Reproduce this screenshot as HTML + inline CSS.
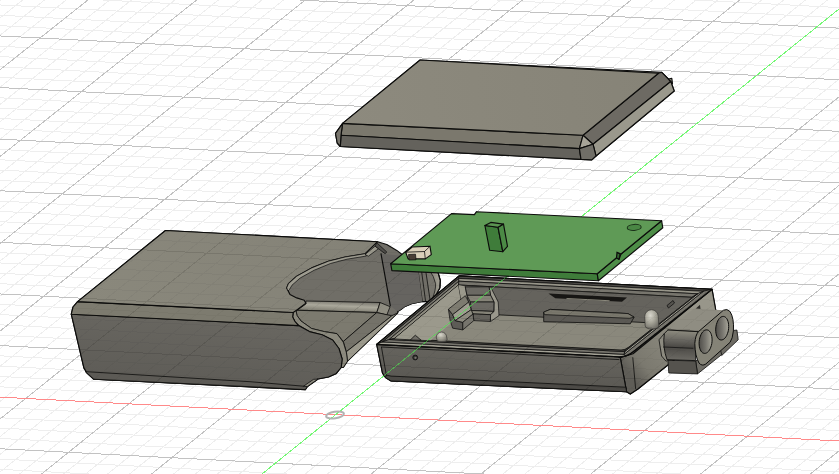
<!DOCTYPE html>
<html><head><meta charset="utf-8"><title>Exploded enclosure view</title>
<style>html,body{margin:0;padding:0;background:#fff;font-family:"Liberation Sans",sans-serif}svg{display:block}</style>
</head><body>
<svg width="839" height="474" viewBox="0 0 839 474">
<defs>
<linearGradient id="lidtop" gradientUnits="userSpaceOnUse" x1="340" y1="120" x2="660" y2="75"><stop offset="0" stop-color="#8d8a7e"/><stop offset="1" stop-color="#868377"/></linearGradient>
<linearGradient id="stop" gradientUnits="userSpaceOnUse" x1="80" y1="300" x2="370" y2="245"><stop offset="0" stop-color="#8a887c"/><stop offset="1" stop-color="#848277"/></linearGradient>
<linearGradient id="sfront" gradientUnits="userSpaceOnUse" x1="200" y1="320" x2="194" y2="386"><stop offset="0" stop-color="#686660"/><stop offset="1" stop-color="#5e5c57"/></linearGradient>
<linearGradient id="sfillet" gradientUnits="userSpaceOnUse" x1="340" y1="301" x2="339.5" y2="312"><stop offset="0" stop-color="#77756d"/><stop offset="0.45" stop-color="#aaa89b"/><stop offset="1" stop-color="#7a786d"/></linearGradient>
<linearGradient id="cfront" gradientUnits="userSpaceOnUse" x1="500" y1="350" x2="498" y2="388"><stop offset="0" stop-color="#66645e"/><stop offset="1" stop-color="#595752"/></linearGradient>
<linearGradient id="cright" gradientUnits="userSpaceOnUse" x1="628" y1="372" x2="700" y2="315"><stop offset="0" stop-color="#5f5d57"/><stop offset="0.18" stop-color="#7b796f"/><stop offset="1" stop-color="#98968a"/></linearGradient>
<linearGradient id="barrel" gradientUnits="userSpaceOnUse" x1="680" y1="331" x2="679" y2="360"><stop offset="0" stop-color="#8c8a7e"/><stop offset="0.3" stop-color="#6a6862"/><stop offset="0.55" stop-color="#4b4945"/><stop offset="1" stop-color="#6c6a64"/></linearGradient>
<linearGradient id="hole" gradientUnits="objectBoundingBox" x1="0" y1="0.5" x2="1" y2="0.45"><stop offset="0" stop-color="#504e4a"/><stop offset="0.5" stop-color="#77756e"/><stop offset="1" stop-color="#a8a69a"/></linearGradient>
<radialGradient id="pin" cx="0.4" cy="0.3" r="0.8"><stop offset="0" stop-color="#d8d6cc"/><stop offset="0.5" stop-color="#a3a195"/><stop offset="1" stop-color="#66645e"/></radialGradient>
<linearGradient id="send" gradientUnits="userSpaceOnUse" x1="431" y1="285" x2="441" y2="283"><stop offset="0" stop-color="#858377"/><stop offset="1" stop-color="#a5a397"/></linearGradient>
<clipPath id="lowclip"><polygon points="77.6,301.6 165.5,230.5 377.6,241.7 386.8,244.5 396.8,250.4 404.0,256.0 436.0,270.0 438.2,273.2 440.3,280.5 439.8,287.9 436.0,295.0 430.0,301.5 421.0,301.6 411.4,303.7 405.0,306.4 400.8,309.5 397.6,311.6 398.0,312.7 347.5,361.2 343.3,367.5 341.2,367.5 335.9,373.8 328.5,377.0 318.0,379.0 307.4,386.5 305.3,389.6 93.9,379.2 87.0,373.0 83.9,367.9 71.3,314.2 73.0,307.0"/><polygon points="376.7,344.4 459.1,275.9 712.0,289.2 718.3,324.5 637.9,389.0 630.3,394.1 626.6,391.8 391.1,380.9 385.5,377.5 382.5,373.2"/></clipPath>
</defs>

<rect width="839" height="474" fill="#fff"/>
<g stroke-width="1" fill="none" opacity="1.0" shape-rendering="crispEdges">
<path d="M-421.4,-10L-1051.1,484M-399.6,-10L-1029.1,484M-377.8,-10L-1007.0,484M-356.1,-10L-984.9,484M-312.6,-10L-940.8,484M-290.8,-10L-918.7,484M-269.1,-10L-896.6,484M-247.3,-10L-874.5,484M-203.8,-10L-830.4,484M-182.1,-10L-808.3,484M-160.3,-10L-786.3,484M-138.6,-10L-764.2,484M-95.1,-10L-720.1,484M-73.3,-10L-698.0,484M-51.6,-10L-676.0,484M-29.9,-10L-653.9,484M13.6,-10L-609.8,484M35.3,-10L-587.8,484M57.1,-10L-565.7,484M78.8,-10L-543.7,484M122.3,-10L-499.6,484M144.0,-10L-477.5,484M165.7,-10L-455.5,484M187.5,-10L-433.4,484M230.9,-10L-389.4,484M252.7,-10L-367.3,484M274.4,-10L-345.3,484M296.1,-10L-323.3,484M339.5,-10L-279.2,484M361.3,-10L-257.2,484M383.0,-10L-235.1,484M404.7,-10L-213.1,484M448.1,-10L-169.1,484M469.8,-10L-147.0,484M491.6,-10L-125.0,484M513.3,-10L-103.0,484M556.7,-10L-59.0,484M578.4,-10L-36.9,484M600.1,-10L-14.9,484M621.8,-10L7.1,484M665.2,-10L51.1,484M686.9,-10L73.1,484M708.6,-10L95.1,484M730.3,-10L117.1,484M774.0,-10L161.1,484M796.0,-10L183.0,484M817.9,-10L205.0,484M839.9,-10L227.0,484M883.8,-10L270.9,484M905.7,-10L292.8,484M927.7,-10L314.8,484M949.7,-10L336.8,484M993.6,-10L380.7,484M1015.5,-10L402.6,484M1037.5,-10L424.6,484M1059.4,-10L446.5,484M1103.4,-10L490.5,484M1125.3,-10L512.4,484M1147.3,-10L534.4,484M1169.2,-10L556.3,484M1213.2,-10L600.2,484M1235.1,-10L622.2,484M1257.1,-10L644.2,484M1279.0,-10L666.1,484M1322.9,-10L710.0,484M1344.9,-10L732.0,484M1366.9,-10L754.0,484M1388.8,-10L775.9,484M1432.7,-10L819.8,484M1454.7,-10L841.8,484M1476.6,-10L863.7,484M1498.6,-10L885.7,484M1542.5,-10L929.6,484M1564.5,-10L951.6,484M1586.4,-10L973.5,484M1608.4,-10L995.5,484M1652.3,-10L1039.4,484M1674.3,-10L1061.4,484M1696.2,-10L1083.3,484M1718.2,-10L1105.3,484M-10,-109.1L849,-64.2M-10,-98.8L849,-53.9M-10,-88.5L849,-43.5M-10,-78.1L849,-33.2M-10,-57.5L849,-12.6M-10,-47.2L849,-2.3M-10,-36.9L849,8.1M-10,-26.5L849,18.4M-10,-5.9L849,39.0M-10,4.4L849,49.3M-10,14.7L849,59.7M-10,25.1L849,70.0M-10,45.7L849,90.6M-10,56.0L849,100.9M-10,66.3L849,111.3M-10,76.7L849,121.6M-10,97.3L849,142.2M-10,107.6L849,152.5M-10,117.9L849,162.9M-10,128.3L849,173.2M-10,148.9L849,193.8M-10,159.2L849,204.1M-10,169.5L849,214.5M-10,179.9L849,224.8M-10,200.5L849,245.4M-10,210.8L849,255.7M-10,221.1L849,266.1M-10,231.5L849,276.4M-10,252.1L849,297.0M-10,262.4L849,307.3M-10,272.7L849,317.7M-10,283.1L849,328.0M-10,303.7L849,348.6M-10,314.0L849,358.9M-10,324.3L849,369.3M-10,334.7L849,379.6M-10,355.3L849,400.2M-10,365.6L849,410.5M-10,375.9L849,420.9M-10,386.3L849,431.2M-10,406.9L849,451.8M-10,417.2L849,462.1M-10,427.5L849,472.5M-10,437.9L849,482.8M-10,458.5L849,503.4M-10,468.8L849,513.7M-10,479.1L849,524.1M-10,489.5L849,534.4M-10,510.1L849,555.0M-10,520.4L849,565.3M-10,530.7L849,575.7M-10,541.1L849,586.0M-10,561.7L849,606.6M-10,572.0L849,616.9M-10,582.3L849,627.3M-10,592.7L849,637.6" stroke="#eeeeee" opacity="1.0"/>
<path d="M-443.1,-10L-1073.2,484M-334.3,-10L-962.8,484M-225.6,-10L-852.5,484M-116.8,-10L-742.2,484M-8.1,-10L-631.9,484M100.5,-10L-521.6,484M209.2,-10L-411.4,484M317.8,-10L-301.2,484M426.4,-10L-191.1,484M535.0,-10L-81.0,484M643.5,-10L29.1,484M752.0,-10L139.1,484M971.6,-10L358.7,484M1081.4,-10L468.5,484M1191.2,-10L578.3,484M1301.0,-10L688.1,484M1410.8,-10L797.9,484M1520.6,-10L907.7,484M1630.4,-10L1017.5,484M-10,-119.4L849,-74.5M-10,-67.8L849,-22.9M-10,-16.2L849,28.7M-10,35.4L849,80.3M-10,87.0L849,131.9M-10,138.6L849,183.5M-10,190.2L849,235.1M-10,241.8L849,286.7M-10,293.4L849,338.3M-10,345.0L849,389.9M-10,448.2L849,493.1M-10,499.8L849,544.7M-10,551.4L849,596.3" stroke="#c2c2c2"/>
</g>
<path d="M0,397.1L839,441" stroke="#ff8a8a" stroke-width="1" shape-rendering="crispEdges" fill="none"/>
<path d="M839,9L262,474" stroke="#74f874" stroke-width="1" fill="none" shape-rendering="crispEdges"/>
<ellipse cx="335" cy="415" rx="9" ry="3.3" fill="none" stroke="#b2b2b2" stroke-width="2" transform="rotate(-9 335 415)"/>
<polygon points="77.6,301.6 165.5,230.5 377.6,241.7 386.8,244.5 396.8,250.4 404.0,256.0 436.0,270.0 438.2,273.2 440.3,280.5 439.8,287.9 436.0,295.0 430.0,301.5 421.0,301.6 411.4,303.7 405.0,306.4 400.8,309.5 397.6,311.6 398.0,312.7 347.5,361.2 343.3,367.5 341.2,367.5 335.9,373.8 328.5,377.0 318.0,379.0 307.4,386.5 305.3,389.6 93.9,379.2 87.0,373.0 83.9,367.9 71.3,314.2 73.0,307.0" fill="#706e67" stroke="#0c0c0b" stroke-width="1.15" stroke-linejoin="round" />
<polygon points="425.6,268.0 436.0,270.0 438.2,273.2 440.3,280.5 439.8,287.9 436.0,295.0 430.0,301.5 430.3,301.5" fill="#77756d" />
<path d="M429.3,270L436,270L438.2,273.2L440.3,280.5L439.8,287.9L436,295L432,299.5Q436,290 435.6,283.7Q434,276 429.3,270Z" fill="url(#send)" stroke="#0c0c0b" stroke-width="0.7" stroke-linejoin="round" />
<polyline points="417.7,268.0 422.4,301.6" fill="none" stroke="#0c0c0b" stroke-width="0.8" stroke-linejoin="round" stroke-linecap="round" />
<polyline points="421.4,270.0 425.6,301.5" fill="none" stroke="#0c0c0b" stroke-width="0.8" stroke-linejoin="round" stroke-linecap="round" />
<polyline points="425.6,270.0 430.3,301.5" fill="none" stroke="#0c0c0b" stroke-width="0.8" stroke-linejoin="round" stroke-linecap="round" />
<polyline points="436.0,270.0 438.2,273.2 440.3,280.5 439.8,287.9 436.0,295.0 430.0,301.5 421.0,301.6 411.4,303.7 405.0,306.4 400.8,309.5 397.6,311.6" fill="none" stroke="#0c0c0b" stroke-width="1.15" stroke-linejoin="round" stroke-linecap="round" />
<polygon points="381.0,253.7 404.0,256.0 417.7,266.0 422.4,301.6 411.4,303.7 405.0,306.4 400.8,309.5 397.6,311.6 390.5,306.0" fill="#666460" />
<polygon points="305.9,301.0 380.1,302.5 376.8,312.5 297.0,310.3 305.9,304.0" fill="url(#sfillet)" stroke="#0c0c0b" stroke-width="0.8" stroke-linejoin="round" />
<polygon points="380.1,302.5 390.1,306.7 386.8,315.0 376.8,312.5" fill="#8f8d81" stroke="#0c0c0b" stroke-width="0.8" stroke-linejoin="round" />
<polygon points="297.0,310.3 376.8,312.5 343.3,341.5 337.0,333.7 324.3,331.6 311.6,328.5 301.0,321.0 297.0,315.5 295.8,309.5" fill="#7c7a6f" stroke="#0c0c0b" stroke-width="0.8" stroke-linejoin="round" />
<polygon points="343.3,341.5 376.8,312.5 391.8,315.8 346.4,351.7" fill="#747269" stroke="#0c0c0b" stroke-width="0.8" stroke-linejoin="round" />
<polygon points="346.4,351.7 391.8,315.8 398.0,312.7 347.5,361.2" fill="#9b998c" stroke="#0c0c0b" stroke-width="0.8" stroke-linejoin="round" />
<polyline points="381.0,253.7 390.3,305.6" fill="none" stroke="#0c0c0b" stroke-width="1.15" stroke-linejoin="round" stroke-linecap="round" />
<polygon points="293.7,310.5 292.7,316.9 295.0,321.5 299.0,325.3 309.5,331.6 322.2,334.8 332.7,340.0 339.0,348.5 342.2,359.0 341.2,367.5 343.3,367.5 347.5,361.2 346.4,352.7 343.3,342.2 337.0,333.7 324.3,331.6 311.6,328.5 301.0,321.0 297.0,315.5 295.8,309.5" fill="#8b897d" stroke="#0c0c0b" stroke-width="0.8" stroke-linejoin="round" />
<polygon points="71.3,314.2 298.5,325.6 309.5,331.6 322.2,334.8 332.7,340.0 339.0,348.5 342.2,359.0 341.2,367.5 335.9,373.8 328.5,377.0 318.0,379.0 307.4,386.5 305.3,389.6 93.9,379.2 87.0,373.0 83.9,367.9" fill="url(#sfront)" stroke="#0c0c0b" stroke-width="1.15" stroke-linejoin="round" />
<polygon points="85.1,371.6 250.0,381.7 307.4,386.5 305.3,389.6 250.0,386.7 93.9,379.2 87.0,373.0" fill="#5c5a55" stroke="#0c0c0b" stroke-width="0.8" stroke-linejoin="round" />
<polygon points="307.4,386.5 318.0,379.0 313.5,379.4 303.5,386.2" fill="#8b897d" stroke="#0c0c0b" stroke-width="0.7" stroke-linejoin="round" />
<polygon points="77.6,301.6 293.2,312.5 292.7,316.9 295.0,321.5 298.5,325.6 71.3,314.2 73.0,307.0" fill="#7d7b6f" stroke="#0c0c0b" stroke-width="1.15" stroke-linejoin="round" />
<polygon points="77.6,301.6 165.5,230.5 377.6,241.7 365.1,253.7 345.1,257.0 328.4,261.2 311.7,267.9 296.7,276.2 288.4,283.7 286.7,287.9 290.0,294.6 296.7,297.9 304.2,300.3 305.9,303.3 296.5,310.2 293.2,312.5" fill="url(#stop)" stroke="#0c0c0b" stroke-width="1.15" stroke-linejoin="round" />
<polygon points="365.1,253.7 345.1,257.0 328.4,261.2 311.7,267.9 296.7,276.2 288.4,283.7 286.7,287.9 288.0,291.0 289.5,289.5 292.0,285.2 300.2,278.0 314.3,270.2 330.5,263.5 347.0,259.2 366.5,256.0" fill="#9d9b8f" stroke="#0c0c0b" stroke-width="0.7" stroke-linejoin="round" />
<polygon points="375.1,246.2 365.1,254.5 368.4,256.2 378.5,248.7" fill="#9a988c" stroke="#0c0c0b" stroke-width="0.7" stroke-linejoin="round" />
<polygon points="376.8,242.8 386.8,252.0 385.1,253.7 375.1,246.2" fill="#504e4a" stroke="#0c0c0b" stroke-width="0.7" stroke-linejoin="round" />
<polygon points="376.7,344.4 459.1,275.9 712.0,289.2 718.3,324.5 637.9,389.0 630.3,394.1 626.6,391.8 391.1,380.9 385.5,377.5 382.5,373.2" fill="#5f5d57" stroke="#0c0c0b" stroke-width="1.15" stroke-linejoin="round" />
<polygon points="620.3,357.7 633.0,353.8 712.0,289.2 718.3,324.5 637.9,389.0 630.3,394.1 626.6,391.8" fill="url(#cright)" stroke="#0c0c0b" stroke-width="1.15" stroke-linejoin="round" />
<polyline points="632.8,357.7 635.6,388.5" fill="none" stroke="#0c0c0b" stroke-width="0.8" stroke-linejoin="round" stroke-linecap="round" />
<polygon points="376.7,344.4 618.0,356.9 620.3,357.7 626.6,391.8 391.1,380.9 385.5,377.5 382.5,373.2" fill="url(#cfront)" stroke="#0c0c0b" stroke-width="1.15" stroke-linejoin="round" />
<polygon points="386.3,375.1 391.1,376.1 625.8,387.2 626.6,391.8 391.1,380.9 385.5,377.5" fill="#4c4a46" stroke="#0c0c0b" stroke-width="0.8" stroke-linejoin="round" />
<polyline points="381.5,347.3 386.3,375.1" fill="none" stroke="#0c0c0b" stroke-width="0.8" stroke-linejoin="round" stroke-linecap="round" />
<polyline points="381.5,347.0 619.0,359.6" fill="none" stroke="#0c0c0b" stroke-width="0.8" stroke-linejoin="round" stroke-linecap="round" />
<circle cx="415.2" cy="357.5" r="2.4" fill="#3a3936" stroke="#111" stroke-width="0.9"/>
<circle cx="415.5" cy="357.8" r="1.1" fill="#77756e"/>
<clipPath id="rimclip"><path d="M376.7,344.4L459.1,275.9L712.0,289.2L634.1,351.0Q626.5,357.2 618.5,356.8Z"/></clipPath>
<path d="M376.7,344.4L459.1,275.9L712.0,289.2L634.1,351.0Q626.5,357.2 618.5,356.8Z" fill="#56544f" stroke="#0c0c0b" stroke-width="1.15" stroke-linejoin="round" />
<g clip-path="url(#rimclip)">
<polygon points="376.7,344.4 459.1,275.9 458.7,278.4 382.5,341.9" fill="#504e49" stroke="#0c0c0b" stroke-width="0.7" stroke-linejoin="round" />
<polygon points="459.1,275.9 712.0,289.2 703.3,291.3 458.7,278.4" fill="#4c4a46" stroke="#0c0c0b" stroke-width="0.7" stroke-linejoin="round" />
<polygon points="712.0,289.2 626.5,357.2 624.0,354.3 703.3,291.3" fill="#77756d" stroke="#0c0c0b" stroke-width="0.7" stroke-linejoin="round" />
<polygon points="626.5,357.2 376.7,344.4 382.5,341.9 624.0,354.3" fill="#a3a195" stroke="#0c0c0b" stroke-width="0.7" stroke-linejoin="round" />
<polygon points="382.5,341.9 458.7,278.4 458.9,281.2 389.1,339.5" fill="#77756d" stroke="#0c0c0b" stroke-width="0.7" stroke-linejoin="round" />
<polygon points="458.7,278.4 703.3,291.3 697.6,293.8 458.9,281.2" fill="#979589" stroke="#0c0c0b" stroke-width="0.7" stroke-linejoin="round" />
<polygon points="703.3,291.3 624.0,354.3 624.7,351.6 697.6,293.8" fill="#a3a195" stroke="#0c0c0b" stroke-width="0.7" stroke-linejoin="round" />
<polygon points="624.0,354.3 382.5,341.9 389.1,339.5 624.7,351.6" fill="#77756d" stroke="#0c0c0b" stroke-width="0.7" stroke-linejoin="round" />
<polygon points="389.1,339.5 458.9,281.2 458.5,285.0 394.7,338.4" fill="#8d8b7f" stroke="#0c0c0b" stroke-width="0.7" stroke-linejoin="round" />
<polygon points="458.9,281.2 697.6,293.8 691.9,297.3 458.5,285.0" fill="#77756d" stroke="#0c0c0b" stroke-width="0.7" stroke-linejoin="round" />
<polygon points="697.6,293.8 624.7,351.6 625.0,350.2 691.9,297.3" fill="#55534e" stroke="#0c0c0b" stroke-width="0.7" stroke-linejoin="round" />
<polygon points="624.7,351.6 389.1,339.5 394.7,338.4 625.0,350.2" fill="#605e58" stroke="#0c0c0b" stroke-width="0.7" stroke-linejoin="round" />
</g>
<path d="M376.7,344.4L459.1,275.9L712.0,289.2L634.1,351.0Q626.5,357.2 618.5,356.8Z" fill="none" stroke="#0c0c0b" stroke-width="1.15" stroke-linejoin="round" />
<clipPath id="open"><path d="M394.7,338.4L458.5,285.0L691.9,297.3L628.8,347.1Q625.0,350.2 621.0,350.0Z"/></clipPath>
<path d="M394.7,338.4L458.5,285.0L691.9,297.3L628.8,347.1Q625.0,350.2 621.0,350.0Z" fill="#8a887c" stroke="#0c0c0b" stroke-width="0.8" stroke-linejoin="round" />
<g clip-path="url(#open)">
<polygon points="394.7,338.4 458.5,285.0 463.5,313.0 399.7,366.4" fill="#9b998c" />
<polygon points="458.5,285.0 691.9,297.3 696.9,325.3 463.5,313.0" fill="#65635d" stroke="#0c0c0b" stroke-width="0.8" stroke-linejoin="round" />
<polygon points="458.5,285.0 465.3,286.6 470.5,314.8 463.5,313.0" fill="#9b998c" />
<polyline points="465.3,286.6 470.5,314.8" fill="none" stroke="#0c0c0b" stroke-width="0.7" stroke-linejoin="round" stroke-linecap="round" />
<polygon points="548.5,293.6 627.0,297.6 622.0,301.8 555.3,298.2" fill="#171614" />
<polygon points="566.0,298.0 610.0,300.3 609.0,301.2 567.0,299.0" fill="#8a887c" />
<polygon points="489.0,286.9 490.6,286.9 498.2,302.0 499.0,315.6 490.6,321.5 490.3,314.7 494.0,311.4 494.0,302.0 490.6,295.3" fill="#9a988c" stroke="#0c0c0b" stroke-width="0.7" stroke-linejoin="round" />
<polygon points="465.3,286.9 489.0,286.9 490.6,295.3 467.0,295.3" fill="#6b6963" stroke="#0c0c0b" stroke-width="0.7" stroke-linejoin="round" />
<polygon points="467.0,295.3 490.6,295.3 494.0,302.0 470.4,302.0" fill="#858377" stroke="#0c0c0b" stroke-width="0.7" stroke-linejoin="round" />
<polygon points="470.4,302.0 494.0,302.0 493.7,311.4 471.2,310.5" fill="#6b6963" stroke="#0c0c0b" stroke-width="0.7" stroke-linejoin="round" />
<polygon points="471.2,310.5 493.7,311.4 490.6,314.7 473.0,313.9" fill="#858377" stroke="#0c0c0b" stroke-width="0.7" stroke-linejoin="round" />
<polygon points="473.0,313.9 490.6,314.7 490.3,321.5 473.8,320.6" fill="#63615b" stroke="#0c0c0b" stroke-width="0.7" stroke-linejoin="round" />
<polygon points="448.4,309.2 452.7,314.7 455.2,320.6 462.8,322.3 462.8,329.9 452.7,328.2 450.1,320.6" fill="#5d5b56" stroke="#0c0c0b" stroke-width="0.7" stroke-linejoin="round" />
<polygon points="448.4,309.2 465.3,295.7 468.7,302.1 452.7,314.7" fill="#7d7b70" stroke="#0c0c0b" stroke-width="0.7" stroke-linejoin="round" />
<polygon points="452.7,314.7 468.7,302.1 471.2,309.7 455.2,320.6" fill="#9f9d91" stroke="#0c0c0b" stroke-width="0.7" stroke-linejoin="round" />
<polygon points="455.2,320.6 471.2,309.7 472.9,314.2 462.8,322.3" fill="#8d8b7f" stroke="#0c0c0b" stroke-width="0.7" stroke-linejoin="round" />
<polygon points="462.8,322.3 472.9,314.2 473.8,320.6 462.8,329.9" fill="#77756d" stroke="#0c0c0b" stroke-width="0.7" stroke-linejoin="round" />
<polygon points="543.7,312.1 550.4,309.4 628.0,313.6 634.1,317.2 630.3,323.8 543.7,321.7" fill="#5b5954" stroke="#0c0c0b" stroke-width="0.8" stroke-linejoin="round" />
<polygon points="543.7,312.1 550.4,309.4 628.0,313.6 634.1,317.2 629.5,318.3 544.5,314.6" fill="#7a786d" stroke="#0c0c0b" stroke-width="0.7" stroke-linejoin="round" />
<polygon points="667.0,305.5 673.0,300.5 674.5,303.0 668.5,308.0" fill="#55534e" stroke="#0c0c0b" stroke-width="0.7" stroke-linejoin="round" />
</g>
<polygon points="410.3,340.0 415.3,335.2 421.2,340.3" fill="#6f6d66" stroke="#0c0c0b" stroke-width="0.8" stroke-linejoin="round" />
<path d="M436.3,337.2A5.2,5.2 0 0 1 446.7,337.2L447.2,339.4A5.2,2.3 0 0 1 436.8,339.4Z" fill="url(#pin)" stroke="#3b3a36" stroke-width="0.7"/>
<path d="M644.7,316.5A6.8,6.8 0 0 1 658.3,316.5L658.8,326.0A6.8,3.1 0 0 1 645.2,326.0Z" fill="url(#pin)" stroke="#3b3a36" stroke-width="0.7"/>
<polygon points="731.0,330.8 736.9,330.0 738.2,339.8 721.7,355.5 718.0,350.0" fill="#6d6b64" stroke="#0c0c0b" stroke-width="0.8" stroke-linejoin="round" />
<polygon points="697.5,373.9 721.7,354.6 719.5,346.0 695.7,361.0" fill="#6f6d66" stroke="#0c0c0b" stroke-width="0.8" stroke-linejoin="round" />
<polygon points="667.9,360.2 695.7,361.0 697.5,373.9 668.8,373.0" fill="#55534e" stroke="#0c0c0b" stroke-width="0.8" stroke-linejoin="round" />
<polygon points="664.3,333.5 659.0,339.8 661.6,356.0 666.1,361.3 668.0,359.5" fill="#8d8b80" stroke="#0c0c0b" stroke-width="0.8" stroke-linejoin="round" />
<polygon points="695.5,308.8 700.0,304.8 700.5,308.9" fill="#2a2926" />
<polygon points="667.9,330.0 698.4,331.7 723.5,310.2 694.0,308.6" fill="#8f8d82" />
<polyline points="667.9,330.0 698.4,331.7" fill="none" stroke="#0c0c0b" stroke-width="0.8" stroke-linejoin="round" stroke-linecap="round" />
<path d="M667.9,330L698.4,331.7L695.5,345L695.7,360.6L667,359.7Q662.5,347 664.3,333.5Z" fill="url(#barrel)" stroke="#0c0c0b" stroke-width="0.9" stroke-linejoin="round" />
<polyline points="663.4,347.0 693.0,348.3" fill="none" stroke="#0c0c0b" stroke-width="0.7" stroke-linejoin="round" stroke-linecap="round" />
<path d="M698.4,331.7L723.5,310.2Q727,308.3 730,311.5Q734.2,318 733.4,330.8Q732.6,339 730,342.4L705.8,364Q702,366.6 699,363Q695,356 694.8,343.4Q695.4,335 698.4,331.7Z" fill="#858377" stroke="#0c0c0b" stroke-width="1" stroke-linejoin="round" />
<polygon points="711.8,336.4 711.4,334.8 710.9,333.4 710.2,332.1 709.5,331.2 708.6,330.4 707.7,330.0 706.7,329.8 705.7,329.9 704.6,330.3 703.6,331.0 702.7,331.9 701.8,333.1 701.0,334.5 700.4,336.1 699.8,337.8 699.4,339.6 699.2,341.4 699.1,343.3 699.2,345.1 699.4,346.8 699.8,348.4 700.3,349.8 701.0,351.1 701.7,352.0 702.6,352.8 703.5,353.2 704.5,353.4 705.5,353.3 706.6,352.9 707.6,352.2 708.5,351.3 709.4,350.1 710.2,348.7 710.8,347.1 711.4,345.4 711.8,343.6 712.0,341.8 712.1,339.9 712.0,338.1" fill="url(#hole)" stroke="#0c0c0b" stroke-width="1" stroke-linejoin="round" />
<polygon points="728.4,323.0 728.0,321.4 727.5,320.0 726.8,318.7 726.1,317.8 725.2,317.0 724.3,316.6 723.3,316.4 722.3,316.5 721.2,316.9 720.2,317.6 719.3,318.5 718.4,319.7 717.6,321.1 717.0,322.7 716.4,324.4 716.0,326.2 715.8,328.0 715.7,329.9 715.8,331.7 716.0,333.4 716.4,335.0 716.9,336.4 717.6,337.7 718.3,338.6 719.2,339.4 720.1,339.8 721.1,340.0 722.1,339.9 723.2,339.5 724.2,338.8 725.1,337.9 726.0,336.7 726.8,335.3 727.4,333.7 728.0,332.0 728.4,330.2 728.6,328.4 728.7,326.5 728.6,324.7" fill="url(#hole)" stroke="#0c0c0b" stroke-width="1" stroke-linejoin="round" />
<g clip-path="url(#lowclip)"><g stroke-width="1" fill="none" opacity="0.11" shape-rendering="crispEdges">
<path d="M-421.4,-10L-1051.1,484M-399.6,-10L-1029.1,484M-377.8,-10L-1007.0,484M-356.1,-10L-984.9,484M-312.6,-10L-940.8,484M-290.8,-10L-918.7,484M-269.1,-10L-896.6,484M-247.3,-10L-874.5,484M-203.8,-10L-830.4,484M-182.1,-10L-808.3,484M-160.3,-10L-786.3,484M-138.6,-10L-764.2,484M-95.1,-10L-720.1,484M-73.3,-10L-698.0,484M-51.6,-10L-676.0,484M-29.9,-10L-653.9,484M13.6,-10L-609.8,484M35.3,-10L-587.8,484M57.1,-10L-565.7,484M78.8,-10L-543.7,484M122.3,-10L-499.6,484M144.0,-10L-477.5,484M165.7,-10L-455.5,484M187.5,-10L-433.4,484M230.9,-10L-389.4,484M252.7,-10L-367.3,484M274.4,-10L-345.3,484M296.1,-10L-323.3,484M339.5,-10L-279.2,484M361.3,-10L-257.2,484M383.0,-10L-235.1,484M404.7,-10L-213.1,484M448.1,-10L-169.1,484M469.8,-10L-147.0,484M491.6,-10L-125.0,484M513.3,-10L-103.0,484M556.7,-10L-59.0,484M578.4,-10L-36.9,484M600.1,-10L-14.9,484M621.8,-10L7.1,484M665.2,-10L51.1,484M686.9,-10L73.1,484M708.6,-10L95.1,484M730.3,-10L117.1,484M774.0,-10L161.1,484M796.0,-10L183.0,484M817.9,-10L205.0,484M839.9,-10L227.0,484M883.8,-10L270.9,484M905.7,-10L292.8,484M927.7,-10L314.8,484M949.7,-10L336.8,484M993.6,-10L380.7,484M1015.5,-10L402.6,484M1037.5,-10L424.6,484M1059.4,-10L446.5,484M1103.4,-10L490.5,484M1125.3,-10L512.4,484M1147.3,-10L534.4,484M1169.2,-10L556.3,484M1213.2,-10L600.2,484M1235.1,-10L622.2,484M1257.1,-10L644.2,484M1279.0,-10L666.1,484M1322.9,-10L710.0,484M1344.9,-10L732.0,484M1366.9,-10L754.0,484M1388.8,-10L775.9,484M1432.7,-10L819.8,484M1454.7,-10L841.8,484M1476.6,-10L863.7,484M1498.6,-10L885.7,484M1542.5,-10L929.6,484M1564.5,-10L951.6,484M1586.4,-10L973.5,484M1608.4,-10L995.5,484M1652.3,-10L1039.4,484M1674.3,-10L1061.4,484M1696.2,-10L1083.3,484M1718.2,-10L1105.3,484M-10,-109.1L849,-64.2M-10,-98.8L849,-53.9M-10,-88.5L849,-43.5M-10,-78.1L849,-33.2M-10,-57.5L849,-12.6M-10,-47.2L849,-2.3M-10,-36.9L849,8.1M-10,-26.5L849,18.4M-10,-5.9L849,39.0M-10,4.4L849,49.3M-10,14.7L849,59.7M-10,25.1L849,70.0M-10,45.7L849,90.6M-10,56.0L849,100.9M-10,66.3L849,111.3M-10,76.7L849,121.6M-10,97.3L849,142.2M-10,107.6L849,152.5M-10,117.9L849,162.9M-10,128.3L849,173.2M-10,148.9L849,193.8M-10,159.2L849,204.1M-10,169.5L849,214.5M-10,179.9L849,224.8M-10,200.5L849,245.4M-10,210.8L849,255.7M-10,221.1L849,266.1M-10,231.5L849,276.4M-10,252.1L849,297.0M-10,262.4L849,307.3M-10,272.7L849,317.7M-10,283.1L849,328.0M-10,303.7L849,348.6M-10,314.0L849,358.9M-10,324.3L849,369.3M-10,334.7L849,379.6M-10,355.3L849,400.2M-10,365.6L849,410.5M-10,375.9L849,420.9M-10,386.3L849,431.2M-10,406.9L849,451.8M-10,417.2L849,462.1M-10,427.5L849,472.5M-10,437.9L849,482.8M-10,458.5L849,503.4M-10,468.8L849,513.7M-10,479.1L849,524.1M-10,489.5L849,534.4M-10,510.1L849,555.0M-10,520.4L849,565.3M-10,530.7L849,575.7M-10,541.1L849,586.0M-10,561.7L849,606.6M-10,572.0L849,616.9M-10,582.3L849,627.3M-10,592.7L849,637.6" stroke="#000" opacity="0.28"/>
<path d="M-443.1,-10L-1073.2,484M-334.3,-10L-962.8,484M-225.6,-10L-852.5,484M-116.8,-10L-742.2,484M-8.1,-10L-631.9,484M100.5,-10L-521.6,484M209.2,-10L-411.4,484M317.8,-10L-301.2,484M426.4,-10L-191.1,484M535.0,-10L-81.0,484M643.5,-10L29.1,484M752.0,-10L139.1,484M971.6,-10L358.7,484M1081.4,-10L468.5,484M1191.2,-10L578.3,484M1301.0,-10L688.1,484M1410.8,-10L797.9,484M1520.6,-10L907.7,484M1630.4,-10L1017.5,484M-10,-119.4L849,-74.5M-10,-67.8L849,-22.9M-10,-16.2L849,28.7M-10,35.4L849,80.3M-10,87.0L849,131.9M-10,138.6L849,183.5M-10,190.2L849,235.1M-10,241.8L849,286.7M-10,293.4L849,338.3M-10,345.0L849,389.9M-10,448.2L849,493.1M-10,499.8L849,544.7M-10,551.4L849,596.3" stroke="#000"/>
</g><path d="M839,9L262,474" stroke="#4fe04f" stroke-width="1" fill="none" opacity="0.6" shape-rendering="crispEdges"/></g>
<polygon points="617.0,252.3 621.0,254.0 619.0,259.5 616.5,257.8" fill="#3a7235" stroke="#0c0c0b" stroke-width="0.8" stroke-linejoin="round" />
<polygon points="390.7,263.7 597.2,273.7 598.4,280.7 391.9,270.6" fill="#3f7c3a" stroke="#0c0c0b" stroke-width="1.15" stroke-linejoin="round" />
<polygon points="597.2,273.7 616.5,257.8 619.0,259.5 621.0,254.0 661.6,220.7 662.8,227.8 598.4,280.7" fill="#4d8d47" stroke="#0c0c0b" stroke-width="1.15" stroke-linejoin="round" />
<polygon points="390.7,263.7 451.5,213.6 474.5,214.6 476.5,211.7 661.6,220.7 621.0,254.0 617.0,252.3 616.5,257.8 597.2,273.7" fill="#5f9a56" stroke="#0c0c0b" stroke-width="1.15" stroke-linejoin="round" />
<polyline points="617.0,252.3 619.5,254.2 619.0,259.5" fill="none" stroke="#0c0c0b" stroke-width="0.8" stroke-linejoin="round" stroke-linecap="round" />
<ellipse cx="634.2" cy="227.4" rx="7" ry="3" fill="#4a8644" stroke="#1a3018" stroke-width="1" transform="rotate(-4 634.2 227.4)"/>
<polygon points="484.9,225.5 498.0,227.2 502.8,251.7 489.7,250.3" fill="#3f7c3a" stroke="#0c0c0b" stroke-width="1.15" stroke-linejoin="round" />
<polygon points="498.0,227.2 503.5,224.1 507.5,246.3 502.8,251.7" fill="#4b8a45" stroke="#0c0c0b" stroke-width="1.15" stroke-linejoin="round" />
<polygon points="484.9,225.5 490.8,222.4 503.5,224.1 498.0,227.2" fill="#5a9451" stroke="#0c0c0b" stroke-width="1.15" stroke-linejoin="round" />
<polygon points="405.7,252.2 412.2,247.0 430.0,246.3 431.3,254.6 425.3,258.9 408.1,258.9" fill="#d9cfb9" stroke="#0c0c0b" stroke-width="1.15" stroke-linejoin="round" />
<polyline points="405.7,252.2 424.5,251.5 430.0,246.3" fill="none" stroke="#0c0c0b" stroke-width="0.8" stroke-linejoin="round" stroke-linecap="round" />
<polyline points="424.5,251.5 425.3,258.9" fill="none" stroke="#0c0c0b" stroke-width="0.8" stroke-linejoin="round" stroke-linecap="round" />
<polygon points="408.5,254.5 415.5,254.2 416.0,259.8 409.0,260.0" fill="#4a3f36" stroke="#0c0c0b" stroke-width="0.7" stroke-linejoin="round" />
<polygon points="420.1,60.0 661.8,72.3 670.8,81.3 674.2,91.0 596.0,156.0 591.8,159.9 581.0,159.4 340.3,146.5 337.2,143.0 335.5,133.4 342.6,123.4" fill="#66645e" stroke="#0c0c0b" stroke-width="1.15" stroke-linejoin="round" />
<polygon points="342.6,123.4 583.0,135.3 579.4,148.6 341.0,135.3" fill="#7b786d" stroke="#0c0c0b" stroke-width="1.15" stroke-linejoin="round" />
<polygon points="341.0,135.3 579.4,148.6 581.0,159.4 340.3,146.5" fill="#64625c" stroke="#0c0c0b" stroke-width="1.15" stroke-linejoin="round" />
<polygon points="342.6,123.4 335.5,133.4 337.2,143.0 340.3,146.5 341.0,135.3" fill="#77746c" stroke="#0c0c0b" stroke-width="1.15" stroke-linejoin="round" />
<polygon points="583.0,135.3 658.5,73.2 661.8,72.3 670.8,81.5 593.0,144.2" fill="#6d6a63" stroke="#0c0c0b" stroke-width="1.15" stroke-linejoin="round" />
<polygon points="593.0,144.2 670.8,81.5 674.2,91.0 596.0,156.0" fill="#9a988c" stroke="#0c0c0b" stroke-width="1.15" stroke-linejoin="round" />
<polygon points="583.0,135.3 579.4,148.6 593.0,144.2" fill="#a7a498" stroke="#0c0c0b" stroke-width="1.15" stroke-linejoin="round" />
<polygon points="579.4,148.6 581.0,159.4 591.8,159.9 596.0,156.0 593.0,144.2" fill="#706e67" stroke="#0c0c0b" stroke-width="1.15" stroke-linejoin="round" />
<polygon points="668.5,79.0 671.8,78.3 672.5,83.5 670.8,81.5" fill="#8a877b" stroke="#0c0c0b" stroke-width="1.15" stroke-linejoin="round" />
<polygon points="420.1,60.0 658.5,73.2 583.0,135.3 342.6,123.4" fill="url(#lidtop)" stroke="#0c0c0b" stroke-width="1.15" stroke-linejoin="round" />
</svg>
</body></html>
